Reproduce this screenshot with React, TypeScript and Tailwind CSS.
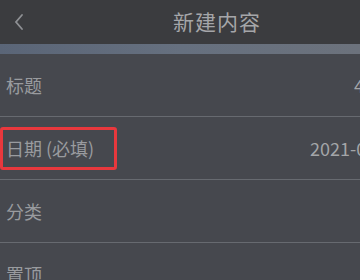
import React from 'react';

const font = { fontFamily: '"Noto Sans CJK SC", "Noto Sans", sans-serif' };

interface RowProps {
  label: string;
  labelWidth: string;
  value?: string;
  children?: React.ReactNode;
}

const Row: React.FC<RowProps> = ({ label, labelWidth, value, children }) => (
  <div className="relative flex h-[63px] items-center border-b border-[#676a70] pl-[6px] whitespace-nowrap">
    <span className={`${labelWidth} shrink-0 text-[18px] text-[#999b9f]`}>{label}</span>
    {value && <span className="shrink-0 text-[18px] text-[#a3a5a8]">{value}</span>}
    {children}
  </div>
);

export default function App() {
  return (
    <div className="w-[360px] h-[280px] overflow-hidden bg-[#46484e]" style={font}>
      {/* Header */}
      <div className="flex h-[44px] items-center bg-[#3b3c3f]">
        <svg width="14" height="20" viewBox="0 0 14 20" className="ml-[12px] shrink-0">
          <path d="M10 3 L4 10 L10 17" fill="none" stroke="#8e9094" strokeWidth="1.8" strokeLinecap="round" />
        </svg>
        <span className="ml-[147px] text-[21px] tracking-[1px] text-[#a5a6a9]">新建内容</span>
      </div>

      {/* Banner strip */}
      <div className="h-[10px] bg-gradient-to-r from-[#5a6577] via-[#66707f] to-[#6c727c]" />

      {/* Form rows */}
      <Row label="标题" labelWidth="w-[348px]" value="4" />
      <Row label="日期 (必填)" labelWidth="w-[304px]" value="2021-05-20">
        <div className="absolute left-0 top-[10px] h-[43px] w-[117px] rounded-[3px] border-[3px] border-[#e8383d]" />
      </Row>
      <Row label="分类" labelWidth="w-[300px]" />
      <Row label="置顶" labelWidth="w-[300px]" />
    </div>
  );
}
